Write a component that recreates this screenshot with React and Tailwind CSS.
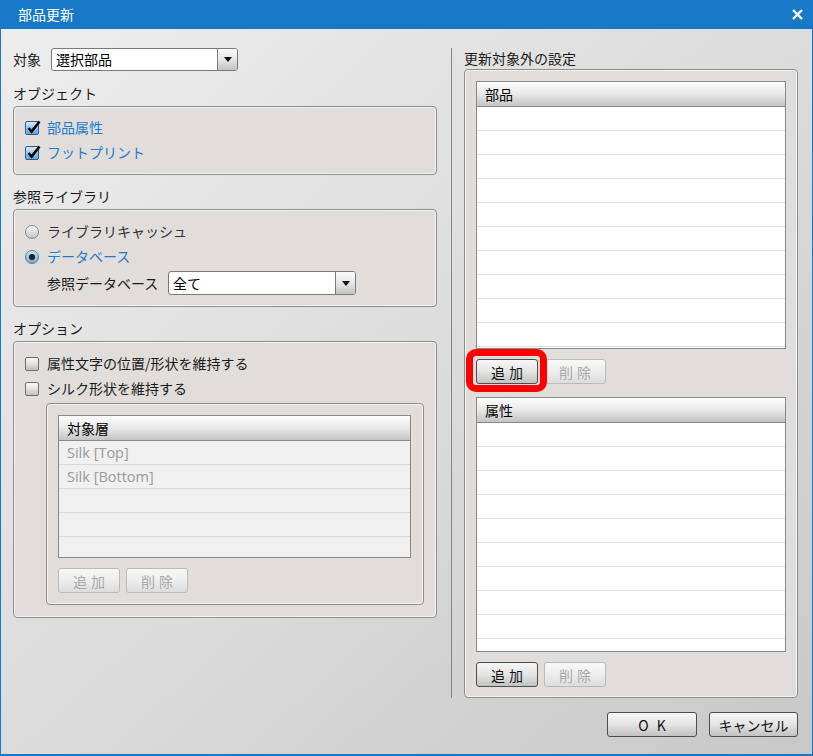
import React from "react";

function Btn({ children, disabled, className = "" }) {
  return (
    <div
      className={`h-[25px] flex items-center justify-center gap-[4px] rounded-[3px] border text-[14px] leading-none ${
        disabled
          ? "border-[#bababa] text-[#a9a9a9] bg-linear-to-b from-[#f8f8f8] via-[#ededed] to-[#dcdcdc]"
          : "border-[#4e4e4e] text-[#111111] bg-linear-to-b from-[#f6f6f6] via-[#e4e4e4] to-[#c2c2c2]"
      } ${className}`}
    >
      {children}
    </div>
  );
}

function Check({ checked }) {
  if (checked) {
    return (
      <div className="relative w-[14px] h-[14px] shrink-0 rounded-[2px] border border-[#2c5e8e] bg-linear-to-b from-[#d6eaf9] to-[#5ea6dd]">
        <svg className="absolute left-[0px] top-[-3px]" width="16" height="16" viewBox="0 0 16 16">
          <path d="M2.5 9 L5.6 12.6 L13.5 2.5" stroke="#000" strokeWidth="2.6" fill="none" strokeLinejoin="miter" />
        </svg>
      </div>
    );
  }
  return (
    <div className="w-[14px] h-[14px] shrink-0 rounded-[2px] border border-[#6f6f6f] bg-linear-to-b from-[#fbfbfb] via-[#e2e2e2] to-[#bdbdbd]" />
  );
}

function Radio({ checked }) {
  if (checked) {
    return (
      <div className="w-[14px] h-[14px] shrink-0 rounded-full border border-[#5b7d9c] bg-linear-to-b from-[#d3e6f5] to-[#6fa8d8] flex items-center justify-center">
        <div className="w-[6px] h-[6px] rounded-full bg-[#1e1e1e]" />
      </div>
    );
  }
  return (
    <div className="w-[14px] h-[14px] shrink-0 rounded-full border border-[#8a8a8a] bg-linear-to-b from-[#fafafa] to-[#c4c4c4]" />
  );
}

function Select({ value, className = "" }) {
  return (
    <div className={`h-full flex rounded-[3px] border border-[#7a7a7a] bg-white overflow-hidden ${className}`}>
      <div className="flex-1 flex items-center pl-[4px] text-[14px] text-black">{value}</div>
      <div className="w-[20px] border-l border-[#7a7a7a] bg-linear-to-b from-[#fafafa] via-[#e6e6e6] to-[#c3c3c3] flex items-center justify-center">
        <svg width="8" height="5" viewBox="0 0 8 5">
          <path d="M0 0 H8 L4 5 Z" fill="#111" />
        </svg>
      </div>
    </div>
  );
}

function Table({ title, items, rows, className = "", rowClass }) {
  const list = Array.from({ length: rows }, (_, i) => items[i] || "");
  return (
    <div className={`border border-[#888888] overflow-hidden flex flex-col ${className}`}>
      <div className="h-[25px] shrink-0 border-b border-[#8a8a8a] bg-linear-to-b from-[#fdfdfd] via-[#e8e8e8] to-[#c4c4c4] pl-[8px] flex items-center text-[14px] text-black">
        {title}
      </div>
      {list.map((t, i) => (
        <div
          key={i}
          className={`h-[24px] shrink-0 pl-[8px] flex items-center text-[14.5px] text-[#9a9a9a] font-['Open_Sans','Noto_Sans_CJK_JP',sans-serif] ${rowClass}`}
        >
          {t}
        </div>
      ))}
    </div>
  );
}

const groupCls =
  "rounded-[4px] border border-[#8e8e8e] bg-[#e0dddb] shadow-[inset_0_0_0_1px_#f4f3f2]";

function Add({ disabled }) {
  return (
    <Btn disabled={disabled} className="w-[62px]">
      <span>追</span>
      <span>加</span>
    </Btn>
  );
}

function Del() {
  return (
    <Btn disabled className="w-[62px]">
      <span>削</span>
      <span>除</span>
    </Btn>
  );
}

export default function App() {
  return (
    <div className="w-[813px] h-[756px] flex flex-col bg-[#1878c8] font-['Noto_Sans_CJK_JP','Noto_Sans',sans-serif] text-[#1a1a1a]">
      {/* title bar */}
      <div className="h-[29px] shrink-0 flex items-center justify-between pl-[18px] pr-[10px]">
        <span className="text-white text-[14px]">部品更新</span>
        <svg width="11" height="11" viewBox="0 0 11 11">
          <path d="M1 1 L10 10 M10 1 L1 10" stroke="#fff" strokeWidth="2.4" />
        </svg>
      </div>

      {/* body */}
      <div className="flex-1 mx-px mb-[2px] bg-linear-to-br from-[#ededed] via-[#dcdcdc] to-[#c8c8c8] flex flex-col pt-[19px]">
        <div className="h-[650px] flex">
          {/* left column */}
          <div className="ml-[12px] w-[424px] flex flex-col">
            <div className="h-[23px] flex items-center">
              <span className="w-[38px] text-[14px]">対象</span>
              <Select value="選択部品" className="w-[187px]" />
            </div>

            <div className="mt-[12px] mb-[3px] h-[20px] flex items-center text-[14px]">オブジェクト</div>
            <div className={`${groupCls} h-[69px] pl-[11px] pt-[8px] flex flex-col`}>
              <div className="h-[25px] flex items-center gap-[8px]">
                <Check checked />
                <span className="text-[14px] text-[#1f7bcb]">部品属性</span>
              </div>
              <div className="h-[25px] flex items-center gap-[8px]">
                <Check checked />
                <span className="text-[14px] text-[#1f7bcb]">フットプリント</span>
              </div>
            </div>

            <div className="mt-[11px] mb-[3px] h-[20px] flex items-center text-[14px]">参照ライブラリ</div>
            <div className={`${groupCls} h-[98px] pl-[11px] pt-[9px] flex flex-col`}>
              <div className="h-[25px] flex items-center gap-[8px]">
                <Radio />
                <span className="text-[14px] text-[#333333]">ライブラリキャッシュ</span>
              </div>
              <div className="h-[25px] flex items-center gap-[8px]">
                <Radio checked />
                <span className="text-[14px] text-[#1f7bcb]">データベース</span>
              </div>
              <div className="mt-[2px] h-[24px] flex items-center pl-[22px]">
                <span className="w-[121px] text-[14px]">参照データベース</span>
                <Select value="全て" className="w-[188px]" />
              </div>
            </div>

            <div className="mt-[11px] mb-[3px] h-[20px] flex items-center text-[14px]">オプション</div>
            <div className={`${groupCls} h-[277px] pl-[11px] pt-[9px] flex flex-col`}>
              <div className="h-[25px] flex items-center gap-[8px]">
                <Check />
                <span className="text-[14px]">属性文字の位置/形状を維持する</span>
              </div>
              <div className="h-[25px] flex items-center gap-[8px]">
                <Check />
                <span className="text-[14px]">シルク形状を維持する</span>
              </div>
              <div className={`${groupCls} mt-[2px] ml-[21px] w-[378px] h-[202px] pl-[11px] pt-[11px] flex flex-col`}>
                <Table
                  title="対象層"
                  items={["Silk [Top]", "Silk [Bottom]"]}
                  rows={5}
                  className="w-[353px] h-[143px] bg-[#f0f0f0]"
                  rowClass="bg-[#f0f0f0] border-b border-[#d9d9d9]"
                />
                <div className="mt-[10px] flex gap-[6px]">
                  <Add disabled />
                  <Del />
                </div>
              </div>
            </div>
          </div>

          {/* divider */}
          <div className="ml-[14px] w-px bg-[#858585]" />

          {/* right column */}
          <div className="ml-[12px] w-[334px] flex flex-col">
            <div className="h-[21px] flex items-center text-[14px]">更新対象外の設定</div>
            <div className={`${groupCls} flex-1 pl-[11px] pt-[11px] flex flex-col`}>
              <Table
                title="部品"
                items={[]}
                rows={11}
                className="w-[310px] h-[268px] bg-white"
                rowClass="bg-white border-b border-[#e3e3e3]"
              />
              <div className="mt-[10px] flex gap-[6px]">
                <div className="relative">
                  <Add />
                  <div className="absolute left-[-10px] right-[-9px] top-[-10px] bottom-[-8px] rounded-[10px] border-[7px] border-[#ff0000]" />
                </div>
                <Del />
              </div>
              <Table
                title="属性"
                items={[]}
                rows={10}
                className="mt-[13px] w-[310px] h-[255px] bg-white"
                rowClass="bg-white border-b border-[#e3e3e3]"
              />
              <div className="mt-[10px] flex gap-[6px]">
                <Add />
                <Del />
              </div>
            </div>
          </div>
        </div>

        {/* footer */}
        <div className="mt-[14px] flex justify-end gap-[12px] pr-[14px]">
          <Btn className="w-[90px]">
            <span>O</span>
            <span className="ml-[4px]">K</span>
          </Btn>
          <Btn className="w-[89px]">キャンセル</Btn>
        </div>
      </div>
    </div>
  );
}
